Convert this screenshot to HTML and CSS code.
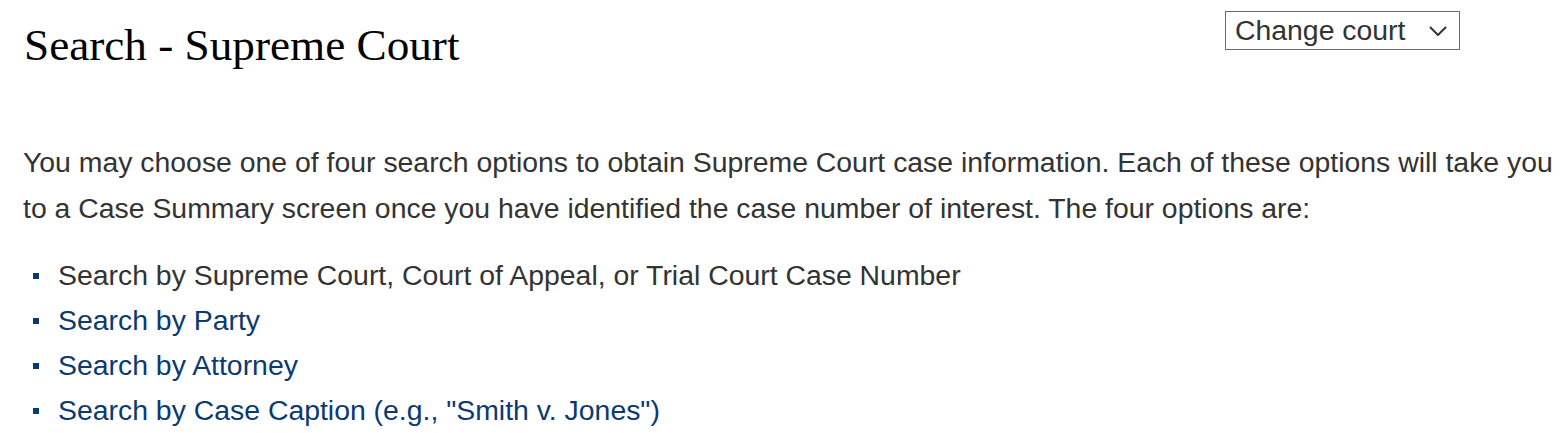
FILE: index.html
```html
<!DOCTYPE html>
<html lang="en">
<head>
<meta charset="utf-8">
<title>Search - Supreme Court</title>
<link rel="stylesheet" href="styles.css">
</head>
<body>
<div class="page">
  <header class="top">
    <h1 class="title">Search - Supreme Court</h1>
    <div class="court-select">
      <span class="court-label">Change court</span>
      <svg class="chev" width="18" height="10" viewBox="0 0 18 10"><path d="M1 1 L9 9 L17 1" fill="none" stroke="#333" stroke-width="2"/></svg>
    </div>
  </header>
  <p class="intro">You may choose one of four search options to obtain Supreme Court case information. Each of these options will take you to a Case Summary screen once you have identified the case number of interest. The four options are:</p>
  <ul class="options">
    <li class="opt">Search by Supreme Court, Court of Appeal, or Trial Court Case Number</li>
    <li class="opt"><a class="link" href="#">Search by Party</a></li>
    <li class="opt"><a class="link" href="#">Search by Attorney</a></li>
    <li class="opt"><a class="link" href="#">Search by Case Caption (e.g., "Smith v. Jones")</a></li>
  </ul>
</div>
</body>
</html>
```
FILE: styles.css
```css
html, body { margin: 0; padding: 0; background: #fff; }
.page { padding: 0 0 0 23px; width: 1565px; box-sizing: border-box; }
.top { display: flex; justify-content: space-between; align-items: flex-start; padding-top: 11px; }
.title {
  margin: 8px 0 0 1px;
  font-family: "Liberation Serif", "Times New Roman", serif;
  font-weight: normal;
  font-size: 45.2px;
  line-height: 52px;
  color: #000;
}
.court-select {
  margin-right: 105px;
  box-sizing: border-box;
  width: 235px;
  height: 39px;
  border: 1px solid #6b6b6b;
  display: flex;
  align-items: center;
  justify-content: space-between;
  padding: 0 12px 0 9px;
  font-family: "Liberation Sans", Arial, sans-serif;
  font-size: 28.4px;
  color: #333;
}
.chev { display: block; }
.intro {
  margin: 68px 0 0 0;
  font-family: "Liberation Sans", Arial, sans-serif;
  font-size: 28.4px;
  line-height: 46px;
  color: #333;
}
.options {
  list-style: none;
  margin: 22px 0 0 0;
  padding: 0;
  font-family: "Liberation Sans", Arial, sans-serif;
  font-size: 28.4px;
  line-height: 45px;
  color: #333;
}
.opt { display: flex; align-items: center; }
.opt::before {
  content: "";
  width: 6px;
  height: 6px;
  background: #0b3a73;
  margin: 0 19px 0 10px;
  flex: none;
}
.link { color: #0b3a73; text-decoration: none; }
```
